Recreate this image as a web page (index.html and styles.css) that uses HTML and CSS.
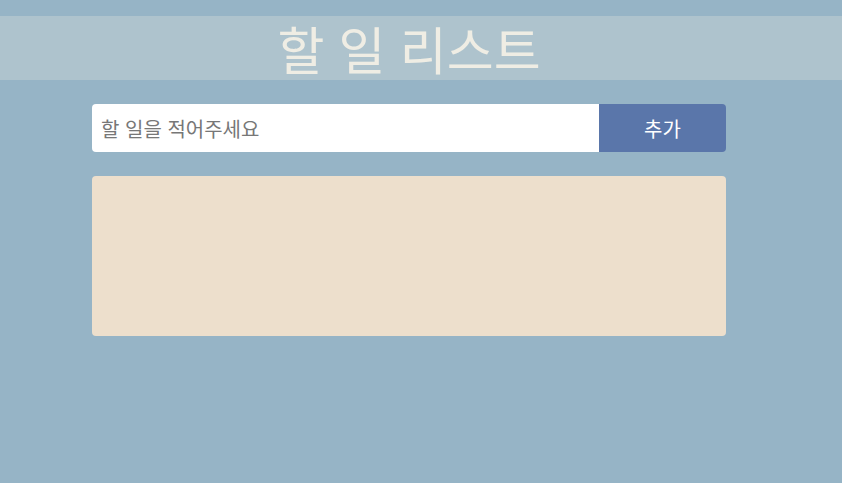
FILE: index.html
```html
<!DOCTYPE html>
<html lang="ko">
<head>
<meta charset="utf-8">
<title>할 일 리스트</title>
<link rel="stylesheet" href="styles.css">
</head>
<body>
<header class="header">
  <h1 class="title">할 일 리스트</h1>
</header>
<main class="main">
  <form class="todo-form">
    <input class="todo-input" type="text" placeholder="할 일을 적어주세요">
    <button class="todo-add" type="button">추가</button>
  </form>
  <ul class="todo-list"></ul>
</main>
</body>
</html>
```
FILE: styles.css
```css
html, body {
  margin: 0;
  padding: 0;
}
body {
  background: #96b4c6;
  font-family: "Noto Sans CJK KR", "Noto Sans", sans-serif;
  padding-top: 16px;
}
.header {
  background: #aec3cd;
  height: 64px;
  display: flex;
  align-items: center;
  justify-content: center;
  padding-right: 24px;
}
.title {
  margin: 0;
  font-size: 51px;
  font-weight: 400;
  color: #efede4;
  line-height: 1;
}
.main {
  width: 634px;
  margin: 24px 0 0;
  padding-left: 92px;
}
.todo-form {
  display: flex;
  height: 48px;
  border-radius: 4px;
  overflow: hidden;
  margin: 0;
}
.todo-input {
  flex: 1;
  border: none;
  outline: none;
  background: #fff;
  padding: 0 9px;
  font-family: inherit;
  font-size: 20px;
  color: #333;
}
.todo-input::placeholder {
  color: #777;
}
.todo-add {
  width: 127px;
  border: none;
  background: #5a76aa;
  color: #fff;
  font-family: inherit;
  font-size: 20px;
  padding: 0;
}
.todo-list {
  list-style: none;
  margin: 24px 0 0;
  padding: 0;
  height: 160px;
  background: #eddfcc;
  border-radius: 4px;
}
```
